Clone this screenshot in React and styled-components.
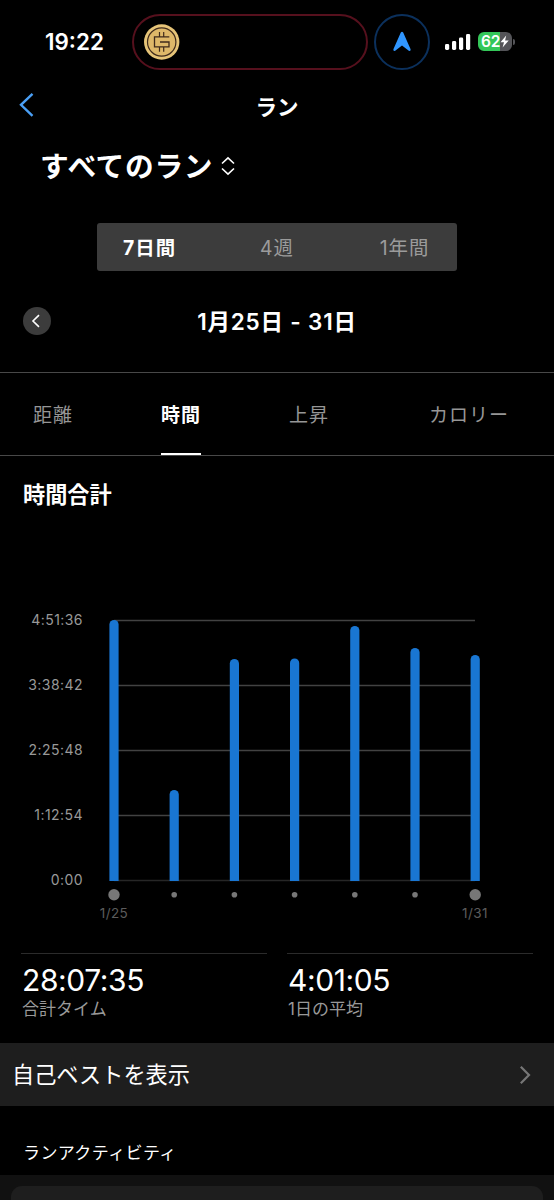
import React, { useState } from 'react';
import styled, { createGlobalStyle } from 'styled-components';

const GlobalStyle = createGlobalStyle`
  * { box-sizing: border-box; }
  body {
    margin: 0;
    background: #000;
    color: #fff;
    font-family: Inter, "Noto Sans CJK JP", sans-serif;
  }
  button {
    margin: 0;
    padding: 0;
    border: 0;
    background: none;
    color: inherit;
    font-family: inherit;
  }
`

const Screen = styled.div`
  width: 554px;
  height: 1200px;
  overflow: hidden;
  display: flex;
  flex-direction: column;
`
const StatusBar = styled.header`
  height: 83px;
  flex: none;
  display: flex;
  align-items: center;
  padding-left: 45px;
`
const Clock = styled.div`
  width: 87px;
  font-size: 22.4px;
  line-height: 30px;
  font-weight: 600;
`
const Island = styled.div`
  width: 236px;
  height: 56px;
  display: flex;
  align-items: center;
  padding-left: 10px;
  border: 2px solid #56101d;
  border-radius: 28px;
`
const LocationRing = styled.div`
  width: 56px;
  height: 56px;
  margin-left: 6px;
  display: flex;
  align-items: center;
  justify-content: center;
  border: 2px solid #0b305c;
  border-radius: 50%;
`
const Signal = styled.svg`
  margin-left: 15px;
`
const Battery = styled.div`
  width: 34px;
  height: 19px;
  margin-left: 7px;
  display: flex;
  align-items: center;
  padding-left: 3px;
  border-radius: 6px;
  background: linear-gradient(to right, #34c759 64%, #545458 64%);
  font-size: 15.5px;
  font-weight: 600;
  line-height: 19px;
  letter-spacing: -0.2px;
`
const BatteryTip = styled.div`
  width: 2px;
  height: 6px;
  margin-left: 1px;
  border-radius: 0 2px 2px 0;
  background: #545458;
`
const NavBar = styled.nav`
  height: 45px;
  flex: none;
  display: grid;
  grid-template-columns: 60px 1fr 60px;
  align-items: center;
`
const BackButton = styled.button`
  display: flex;
  padding: 0 0 2px 19px;
`
const Title = styled.h1`
  margin: 0;
  padding-top: 2px;
  text-align: center;
  font-size: 21.5px;
  line-height: 30px;
  font-weight: 700;
`
const RunFilter = styled.button`
  height: 76px;
  flex: none;
  display: flex;
  align-items: center;
  gap: 8px;
  padding: 2px 0 0 40px;
  font-size: 28.7px;
  line-height: 40px;
  letter-spacing: 0.7px;
  font-weight: 700;
`
const FilterArrows = styled.svg`
  margin-bottom: 2px;
`
const Segments = styled.div`
  width: 360px;
  height: 48px;
  flex: none;
  margin: 19px 0 0 97px;
  display: grid;
  grid-template-columns: 105px 150px 105px;
  border-radius: 3px;
  background: #3c3c3c;
`
const Segment = styled.button`
  padding-top: 2px;
  color: ${props => props.$active ? '#fff' : '#9b9b9b'};
  font-size: 19.4px;
  line-height: 46px;
  letter-spacing: 1px;
  font-weight: ${props => props.$active ? 700 : 400};
`
const DateRow = styled.div`
  height: 101px;
  flex: none;
  display: grid;
  grid-template-columns: 60px 1fr 60px;
  align-items: center;
`
const PreviousButton = styled.button`
  width: 28px;
  height: 28px;
  margin: 0 0 1px 23px;
  display: flex;
  align-items: center;
  justify-content: center;
  border-radius: 50%;
  background: #3c3c3c;
`
const DateRange = styled.div`
  text-align: center;
  font-size: 22.5px;
  line-height: 30px;
  letter-spacing: 0.8px;
  font-weight: 600;
`
const Tabs = styled.div`
  height: 84px;
  flex: none;
  display: grid;
  grid-template-columns: 40px 40px 40px 80px;
  column-gap: 88px;
  padding-left: 33px;
  border-top: 1px solid #484848;
  border-bottom: 1px solid #484848;
`
const Tab = styled.button`
  height: 82px;
  padding-top: 6px;
  margin-left: ${props => props.$wide ? '12px' : 0};
  border-bottom: 2px solid ${props => props.$active ? '#fff' : 'transparent'};
  color: ${props => props.$active ? '#fff' : '#969696'};
  font-size: 19px;
  line-height: 74px;
  letter-spacing: 1px;
  white-space: nowrap;
  font-weight: ${props => props.$active ? 700 : 400};
`
const SectionTitle = styled.h2`
  height: 144px;
  flex: none;
  margin: 0;
  padding: 23px 0 0 23px;
  font-size: 22.2px;
  line-height: 32px;
  font-weight: 700;
`
const ChartArea = styled.div`
  height: 353px;
  flex: none;
  display: flex;
`
const AxisLabels = styled.div`
  width: 83px;
  height: 300px;
  display: flex;
  flex-direction: column;
  justify-content: space-between;
  padding: 10px 0;
  text-align: right;
  color: #999;
  font-size: 14px;
  line-height: 20px;
  letter-spacing: 0.45px;
`
const Totals = styled.div`
  height: 90px;
  flex: none;
  display: grid;
  grid-template-columns: 246px 246px;
  column-gap: 20px;
  padding-left: 21px;
`
const Total = styled.div`
  border-top: 1px solid #2b2b2b;
`
const TotalValue = styled.div`
  padding: 8px 0 0 1px;
  font-size: 30px;
  line-height: 36px;
  letter-spacing: -0.4px;
`
const TotalLabel = styled.div`
  padding-left: 1px;
  color: #999;
  font-size: 17px;
  line-height: 22px;
`
const BestRow = styled.button`
  height: 63px;
  flex: none;
  display: flex;
  align-items: center;
  justify-content: space-between;
  padding: 1px 23px 0 12px;
  background: #1e1e1e;
  font-size: 22.2px;
  line-height: 32px;
`
const ActivityHeading = styled.h3`
  height: 69px;
  flex: none;
  margin: 0;
  padding: 34px 0 0 23px;
  font-size: 17px;
  line-height: 26px;
  letter-spacing: 0.4px;
  font-weight: 400;
`
const ActivityList = styled.div`
  flex: 1;
  padding: 11px 11px 0;
  background: #111;
`
const ActivityCard = styled.div`
  height: 60px;
  border-radius: 11px;
  background: #1e1e1e;
`

const periods = ['7日間', '4週', '1年間'];
const metrics = ['距離', '時間', '上昇', 'カロリー'];
const axis = ['4:51:36', '3:38:42', '2:25:48', '1:12:54', '0:00'];
const bars = [261, 91, 222, 222.5, 255, 233, 226];

const Coin = () => (
  <svg width="36" height="36" viewBox="0 0 36 36" fill="none">
    <circle cx="17.7" cy="18" r="17.7" fill="#e6c478" />
    <circle cx="17.7" cy="18" r="14.2" fill="#deb869" stroke="#3f2a1b" strokeWidth="1.2" />
    <path d="M25.3 12.9H10.5V22.9H25V18H16" stroke="#3f2a1b" strokeWidth="1.3" />
    <path d="M15.5 8V12.9M19.7 8V12.9M15.5 22.9V27.8M19.7 22.9V27.8" stroke="#3f2a1b" strokeWidth="1.2" />
  </svg>
)

const Chart = () => {
  const step = 60.2;
  return (
    <svg width="420" height="352" viewBox="0 0 420 352">
      {axis.map((label, i) => (
        <path key={label} d={`M31 ${20.5 + i * 65}H392`} stroke={i === 4 ? '#262626' : '#424242'} strokeWidth="1.3" />
      ))}
      {bars.map((height, i) => {
        const x = 31 + i * step;
        const top = 281 - height;
        return (
          <g key={i}>
            <path d={`M${x - 4.6} 281V${top + 4.6}a4.6 4.6 0 0 1 9.2 0V281z`} fill="#1976d2" />
            <circle cx={x} cy="294.8" r={i % 6 === 0 ? 5.7 : 2.8} fill="#777" />
          </g>
        )
      })}
      <g fill="#5c5c5c" fontSize="13.5" textAnchor="middle" letterSpacing="0.4">
        <text x="31" y="318">1/25</text>
        <text x="392" y="318">1/31</text>
      </g>
    </svg>
  )
}

export default function App() {
  const [period, setPeriod] = useState(0);
  const [metric, setMetric] = useState(1);

  return (
    <Screen>
      <GlobalStyle />
      <StatusBar>
        <Clock>19:22</Clock>
        <Island><Coin /></Island>
        <LocationRing>
          <svg width="20" height="22" viewBox="0 0 20 22">
            <path d="M8.8 1.6Q10 0 11.2 1.6L18.6 18.2Q19 20.4 16.8 19.8L10 14.4L3.2 19.8Q1 20.4 1.4 18.2Z" fill="#3096ff" />
          </svg>
        </LocationRing>
        <Signal width="26" height="18" viewBox="0 0 26 18" fill="#fff">
          <rect x="0" y="11" width="4.2" height="6" rx="1.4" />
          <rect x="7" y="8" width="4.2" height="9" rx="1.4" />
          <rect x="14" y="4.5" width="4.2" height="12.5" rx="1.4" />
          <rect x="21" y="1" width="4.2" height="16" rx="1.4" />
        </Signal>
        <Battery>
          62
          <svg width="9" height="13" viewBox="0 0 9 13">
            <path d="M6.2 0.5L0.5 7.2H4L2.6 12.5L8.7 5.6H5.1Z" fill="#fff" />
          </svg>
        </Battery>
        <BatteryTip />
      </StatusBar>

      <NavBar>
        <BackButton aria-label="戻る">
          <svg width="15" height="26" viewBox="0 0 15 26" fill="none">
            <path d="M13.5 1.8L2 12.8L13.5 23.8" stroke="#4a9ff5" strokeWidth="2.4" />
          </svg>
        </BackButton>
        <Title>ラン</Title>
      </NavBar>

      <RunFilter>
        すべてのラン
        <FilterArrows width="14" height="20" viewBox="0 0 14 20" fill="none">
          <path d="M1 7.5L7 1.8L13 7.5M1 12.5L7 18.2L13 12.5" stroke="#fff" strokeWidth="1.6" />
        </FilterArrows>
      </RunFilter>

      <Segments>
        {periods.map((name, i) => (
          <Segment key={name} $active={i === period} onClick={() => setPeriod(i)}>{name}</Segment>
        ))}
      </Segments>

      <DateRow>
        <PreviousButton aria-label="前の週">
          <svg width="14" height="14" viewBox="0 0 14 14" fill="none">
            <path d="M9 1.2L3 7L9 12.8" stroke="#fff" strokeWidth="1.6" />
          </svg>
        </PreviousButton>
        <DateRange>1月25日 - 31日</DateRange>
      </DateRow>

      <Tabs>
        {metrics.map((name, i) => (
          <Tab key={name} $active={i === metric} $wide={i === 3} onClick={() => setMetric(i)}>{name}</Tab>
        ))}
      </Tabs>

      <SectionTitle>時間合計</SectionTitle>
      <ChartArea>
        <AxisLabels>
          {axis.map(label => <span key={label}>{label}</span>)}
        </AxisLabels>
        <Chart />
      </ChartArea>

      <Totals>
        <Total>
          <TotalValue>28:07:35</TotalValue>
          <TotalLabel>合計タイム</TotalLabel>
        </Total>
        <Total>
          <TotalValue>4:01:05</TotalValue>
          <TotalLabel>1日の平均</TotalLabel>
        </Total>
      </Totals>

      <BestRow>
        自己ベストを表示
        <svg width="12" height="20" viewBox="0 0 12 20" fill="none">
          <path d="M1.8 1.8L10 10L1.8 18.2" stroke="#777" strokeWidth="2.2" />
        </svg>
      </BestRow>

      <ActivityHeading>ランアクティビティ</ActivityHeading>
      <ActivityList>
        <ActivityCard />
      </ActivityList>
    </Screen>
  )
}
